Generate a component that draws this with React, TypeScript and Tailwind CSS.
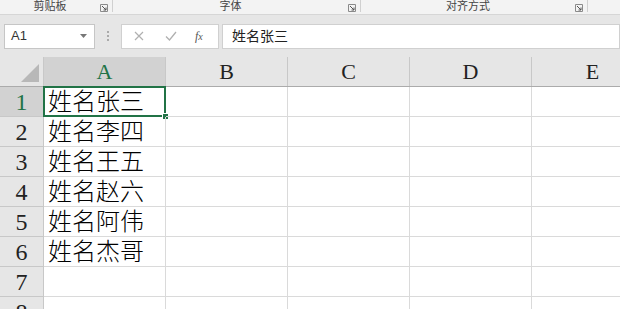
import React from 'react';

const cols = ['A', 'B', 'C', 'D', 'E'];
const rows = ['姓名张三', '姓名李四', '姓名王五', '姓名赵六', '姓名阿伟', '姓名杰哥', '', ''];

const groups = [
  { label: '剪贴板', width: 'w-[113px]' },
  { label: '字体', width: 'w-[248px]' },
  { label: '对齐方式', width: 'w-[227px]' },
];

const Launcher = () => (
  <svg width="8" height="8" viewBox="0 0 8 8" className="shrink-0">
    <path d="M0.5 0.5 H7.5 V7.5 H0.5 Z" fill="none" stroke="#8a8a8a" strokeWidth="1" />
    <path d="M2 2 L6 6 M6 3.5 V6 H3.5" fill="none" stroke="#555" strokeWidth="1" />
  </svg>
);

const App: React.FC = () => {
  return (
    <div className="w-[620px] h-[309px] overflow-hidden bg-white flex flex-col" style={{ fontFamily: '"Liberation Sans", "Noto Sans CJK SC", sans-serif' }}>
      {/* 功能区分组标签 */}
      <div className="h-[15px] shrink-0 flex bg-[#f3f3f3] border-b border-[#d6d6d6] overflow-hidden">
        {groups.map((g) => (
          <div key={g.label} className={`${g.width} shrink-0 flex items-start`}>
            <div className="flex-1 text-center text-[11px] leading-[12px] text-[#444]">{g.label}</div>
            <div className="mt-[4px] mr-[4px]"><Launcher /></div>
            <div className="w-px h-[12px] bg-[#d0d0d0]" />
          </div>
        ))}
      </div>

      {/* 编辑栏 */}
      <div className="h-[42px] shrink-0 bg-[#e6e6e6] flex items-center">
        <div className="ml-[4px] w-[91px] h-[25px] bg-white border border-[#c6c6c6] flex items-center justify-between pl-[6px] pr-[7px]">
          <span className="text-[13px] text-[#333]">A1</span>
          <svg width="7" height="4" viewBox="0 0 7 4"><path d="M0 0 H7 L3.5 4 Z" fill="#777" /></svg>
        </div>
        <div className="ml-[12px] flex flex-col gap-[2px]">
          <div className="w-[2px] h-[2px] bg-[#aaa]" />
          <div className="w-[2px] h-[2px] bg-[#aaa]" />
          <div className="w-[2px] h-[2px] bg-[#aaa]" />
        </div>
        <div className="ml-[12px] w-[98px] h-[25px] bg-white border border-[#d0d0d0] flex items-center">
          <svg width="10" height="10" viewBox="0 0 10 10" className="ml-[12px]">
            <path d="M1 1 L9 9 M9 1 L1 9" stroke="#b0b0b0" strokeWidth="1.2" />
          </svg>
          <svg width="12" height="10" viewBox="0 0 12 10" className="ml-[21px]">
            <path d="M1 5.5 L4.5 9 L11 1" fill="none" stroke="#b0b0b0" strokeWidth="1.3" />
          </svg>
          <span className="ml-[18px] text-[12px] italic text-[#555]" style={{ fontFamily: '"Liberation Serif", serif' }}>
            f<span className="text-[10px]">x</span>
          </span>
        </div>
        <div className="ml-[3px] flex-1 h-[25px] bg-white border border-[#d0d0d0] flex items-center pl-[9px] text-[14px] text-[#222]">
          姓名张三
        </div>
      </div>

      {/* 表格 */}
      <div className="flex flex-col" style={{ fontFamily: '"Liberation Serif", "Noto Sans CJK SC", serif' }}>
        {/* 列标题 */}
        <div className="h-[30px] flex bg-[#e6e6e6] border-b border-[#ababab]">
          <div className="w-[44px] shrink-0 border-r border-[#c8c8c8] relative">
            <svg width="44" height="29" viewBox="0 0 44 29" className="absolute inset-0">
              <path d="M21 25 H39 V7 Z" fill="#b8b8b8" />
            </svg>
          </div>
          {cols.map((c, i) => (
            <div
              key={c}
              className={`w-[122px] shrink-0 border-r border-[#c8c8c8] flex items-center justify-center text-[22px] ${i === 0 ? 'bg-[#d2d2d2] text-[#217346]' : 'text-[#222]'}`}
            >
              {c}
            </div>
          ))}
        </div>

        {/* 数据行 */}
        {rows.map((text, r) => (
          <div key={r} className="h-[30px] shrink-0 flex">
            <div
              className={`w-[44px] shrink-0 border-r border-b border-[#c8c8c8] flex items-center justify-center text-[24px] ${r === 0 ? 'bg-[#d2d2d2] text-[#217346]' : 'bg-[#e6e6e6] text-[#222]'}`}
            >
              {r + 1}
            </div>
            {cols.map((c, i) => (
              <div key={c} className="w-[122px] shrink-0 border-r border-b border-[#dadada] relative flex items-center">
                {i === 0 && (
                  <span className="pl-[4px] text-[24px] leading-none font-light text-black whitespace-nowrap">{text}</span>
                )}
                {i === 0 && r === 0 && (
                  <>
                    <div className="absolute -top-px -left-px -right-px -bottom-px border-2 border-[#217346]" />
                    <div className="absolute -right-[4px] -bottom-[4px] w-[7px] h-[7px] bg-[#217346] border border-white" />
                  </>
                )}
              </div>
            ))}
          </div>
        ))}
      </div>
    </div>
  );
};

export default App;
